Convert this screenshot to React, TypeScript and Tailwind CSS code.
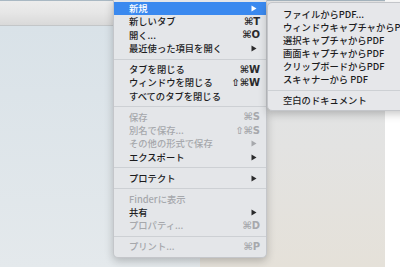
import React from "react";

type Item =
  | { sep: true }
  | {
      sep?: false;
      label: string;
      sc?: string;
      arrow?: boolean;
      disabled?: boolean;
      active?: boolean;
    };

const mainItems: Item[] = [
  { label: "新規", arrow: true, active: true },
  { label: "新しいタブ", sc: "⌘T" },
  { label: "開く...", sc: "⌘O" },
  { label: "最近使った項目を開く", arrow: true },
  { sep: true },
  { label: "タブを閉じる", sc: "⌘W" },
  { label: "ウィンドウを閉じる", sc: "⇧⌘W" },
  { label: "すべてのタブを閉じる" },
  { sep: true },
  { label: "保存", sc: "⌘S", disabled: true },
  { label: "別名で保存...", sc: "⇧⌘S", disabled: true },
  { label: "その他の形式で保存", arrow: true, disabled: true },
  { label: "エクスポート", arrow: true },
  { sep: true },
  { label: "プロテクト", arrow: true },
  { sep: true },
  { label: "Finderに表示", disabled: true },
  { label: "共有", arrow: true },
  { label: "プロパティ...", sc: "⌘D", disabled: true },
  { sep: true },
  { label: "プリント...", sc: "⌘P", disabled: true },
];

const subItems: Item[] = [
  { label: "ファイルからPDF..." },
  { label: "ウィンドウキャプチャからPDF" },
  { label: "選択キャプチャからPDF" },
  { label: "画面キャプチャからPDF" },
  { label: "クリップボードからPDF" },
  { label: "スキャナーから PDF" },
  { sep: true },
  { label: "空白のドキュメント" },
];

const font = {
  fontFamily: '"Noto Sans CJK JP", "Noto Sans", "DejaVu Sans", sans-serif',
};

function Arrow({ color }: { color: string }) {
  return (
    <svg width="6" height="7" viewBox="0 0 6 7" className="mr-[3px]">
      <polygon points="0.5,0.5 5.5,3.5 0.5,6.5" fill={color} />
    </svg>
  );
}

function Row({ item, rowH }: { item: Item; rowH: string }) {
  if (item.sep) {
    return (
      <div className="flex h-[7.8px] items-center">
        <div className="h-px w-full bg-[#cdd0d4]" />
      </div>
    );
  }
  const textColor = item.active
    ? "text-white"
    : item.disabled
    ? "text-[#a6a8ac]"
    : "text-[#1c1c1e]";
  const scColor = item.active
    ? "#ffffff"
    : item.disabled
    ? "#a6a8ac"
    : "#2a2a2c";
  return (
    <div
      className={`flex ${rowH} items-center whitespace-nowrap pl-[15px] pr-[6px] ${
        item.active ? "bg-[#3a89ef]" : ""
      } ${textColor}`}
    >
      <span className="flex-1 text-[9.3px] font-medium leading-none">
        {item.label}
      </span>
      {item.sc && (
        <span
          className="text-[10px] font-bold leading-none"
          style={{
            color: scColor,
            fontFamily: '"DejaVu Sans", "Noto Sans", sans-serif',
          }}
        >
          {item.sc}
        </span>
      )}
      {item.arrow && <Arrow color={scColor} />}
    </div>
  );
}

export default function App() {
  return (
    <div
      className="relative h-[267px] w-[400px] overflow-hidden bg-white"
      style={font}
    >
      {/* background */}
      <div className="flex h-full w-full">
        <div className="flex w-[385px] flex-col">
          <div className="h-px bg-[#a9b8c3]" />
          <div className="h-[24px] bg-gradient-to-b from-[#ececec] via-[#e6e6e6] to-[#d9d9d9]" />
          <div className="h-px bg-[#c3c6c8]" />
          <div className="flex flex-1">
            <div className="w-[200px] bg-gradient-to-b from-[#d9e2e8] to-[#e4e9ec]" />
            <div className="flex-1 bg-gradient-to-b from-[#e1e4e7] via-[#e3e3e2] to-[#e5e1d9]" />
          </div>
        </div>
        <div className="flex-1 bg-white" />
      </div>

      {/* main menu */}
      <div className="absolute left-[113px] top-0 w-[154px] rounded-b-[5px] border-x border-b border-[#c4c6ca] bg-[#e4e6e9] pb-[3px] pt-[2px] shadow-[0_3px_8px_rgba(0,0,0,0.22)]">
        {mainItems.map((it, i) => (
          <Row key={i} item={it} rowH="h-[13.3px]" />
        ))}
      </div>

      {/* submenu */}
      <div className="absolute left-[267px] top-[2px] w-[150px] rounded-[5px] border border-[#c4c6ca] bg-[#e6e7ea] pb-[3px] pt-[5px] shadow-[0_3px_8px_rgba(0,0,0,0.22)]">
        {subItems.map((it, i) => (
          <Row key={i} item={it} rowH="h-[13.1px]" />
        ))}
      </div>
    </div>
  );
}
